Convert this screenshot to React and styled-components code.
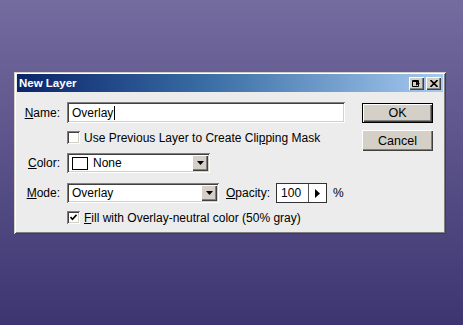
import styled, { createGlobalStyle } from "styled-components";

const Global = createGlobalStyle`
  html, body { margin: 0; padding: 0; }
  body {
    font-family: "Liberation Sans", Arial, sans-serif;
    font-size: 12px;
    color: #000;
  }
`;

const Page = styled.div`
  width: 463px;
  height: 325px;
  box-sizing: border-box;
  padding: 72px 0 0 14px;
  background: linear-gradient(to bottom, #746c9f 0%, #3d3570 100%);
  overflow: hidden;
`;

const Dialog = styled.div`
  width: 432px;
  height: 162px;
  box-sizing: border-box;
  padding: 2px 3px 3px 3px;
  background: #ececec;
  box-shadow: inset 1px 1px 0 #d4d0c8, inset -1px -1px 0 #404040,
    inset 2px 2px 0 #ffffff, inset -2px -2px 0 #808080;
  display: flex;
  flex-direction: column;
`;

const TitleBar = styled.div`
  height: 18px;
  display: flex;
  align-items: center;
  justify-content: space-between;
  padding: 0 2px 0 2px;
  background: linear-gradient(to right, #0a246a 0%, #3a6ea5 45%, #a6caf0 100%);
  color: #fff;
  font-weight: bold;
  font-size: 11.5px;
`;

const TitleButtons = styled.div`
  display: flex;
  gap: 2px;
`;

const TitleButton = styled.div`
  width: 15px;
  height: 13px;
  background: #d4d0c8;
  box-shadow: inset 1px 1px 0 #fff, inset -1px -1px 0 #404040,
    inset -2px -2px 0 #808080;
  display: flex;
  align-items: center;
  justify-content: center;
`;

const Body = styled.div`
  display: flex;
  padding-top: 10px;
`;

const Form = styled.div`
  display: flex;
  flex-direction: column;
`;

const Row = styled.div`
  display: flex;
  align-items: center;
  margin-top: ${(p) => p.$mt || 0}px;
  height: ${(p) => p.$h}px;
`;

const Label = styled.div`
  width: 43px;
  margin-right: 7px;
  text-align: right;
  white-space: nowrap;
`;

const Spacer = styled.div`
  width: 50px;
  flex: none;
`;

const Sunken = styled.div`
  box-sizing: border-box;
  width: ${(p) => p.$w}px;
  height: ${(p) => p.$h}px;
  background: #fff;
  box-shadow: inset 1px 1px 0 #808080, inset -1px -1px 0 #ffffff,
    inset 2px 2px 0 #404040, inset -2px -2px 0 #d4d0c8;
  display: flex;
  align-items: center;
  padding: 2px 2px 2px 5px;
`;

const Caret = styled.span`
  display: inline-block;
  width: 1px;
  height: 14px;
  background: #000;
  margin-left: 1px;
`;

const Grow = styled.div`
  flex: 1;
  display: flex;
  align-items: center;
`;

const ArrowButton = styled.div`
  width: 16px;
  height: 16px;
  flex: none;
  background: #d4d0c8;
  box-shadow: inset 1px 1px 0 #fff, inset -1px -1px 0 #404040,
    inset -2px -2px 0 #808080;
  display: flex;
  align-items: center;
  justify-content: center;
`;

const Swatch = styled.span`
  display: inline-block;
  width: 14px;
  height: 11px;
  border: 1px solid #000;
  background: #fff;
  margin-right: 5px;
`;

const Box = styled.span`
  box-sizing: border-box;
  width: 13px;
  height: 13px;
  flex: none;
  background: #fff;
  box-shadow: inset 1px 1px 0 #808080, inset -1px -1px 0 #ffffff,
    inset 2px 2px 0 #404040, inset -2px -2px 0 #d4d0c8;
  display: flex;
  align-items: center;
  justify-content: center;
  margin-right: 4px;
`;

const Opacity = styled.div`
  box-sizing: border-box;
  width: 51px;
  height: 20px;
  border: 1px solid #333;
  background: #fff;
  display: flex;
  margin: 0 6px;
`;

const OpacityValue = styled.div`
  flex: 1;
  display: flex;
  align-items: center;
  padding-left: 4px;
  border-right: 1px solid #555;
`;

const OpacityStep = styled.div`
  width: 17px;
  display: flex;
  align-items: center;
  justify-content: center;
`;

const Buttons = styled.div`
  display: flex;
  flex-direction: column;
  gap: 7px;
  margin-left: 17px;
  padding-top: 1px;
`;

const Button = styled.div`
  box-sizing: border-box;
  width: 71px;
  height: ${(p) => (p.$default ? 20 : 21)}px;
  background: #d4d0c8;
  display: flex;
  align-items: center;
  justify-content: center;
  font-size: 12.5px;
  box-shadow: ${(p) =>
    p.$default
      ? "inset 0 0 0 1px #000, inset 2px 2px 0 #fff, inset -2px -2px 0 #404040, inset -3px -3px 0 #808080"
      : "inset 1px 1px 0 #fff, inset -1px -1px 0 #404040, inset -2px -2px 0 #808080"};
`;

const InlineLabel = styled.span`
  margin-left: 7px;
`;

const U = styled.span`
  text-decoration: underline;
`;

const DownArrow = () => (
  <svg width="7" height="4" viewBox="0 0 7 4">
    <path d="M0 0h7L3.5 4z" fill="#000" />
  </svg>
);

export default function App() {
  return (
    <Page>
      <Global />
      <Dialog>
        <TitleBar>
          <span>New Layer</span>
          <TitleButtons>
            <TitleButton>
              <svg width="9" height="7" viewBox="0 0 9 7">
                <path d="M0.5 0.5h6v6h-6z" fill="none" stroke="#000" />
                <path d="M0.5 1.5h6" stroke="#000" />
                <path d="M4 1.5l4 2-4 2z" fill="#000" />
              </svg>
            </TitleButton>
            <TitleButton>
              <svg width="8" height="7" viewBox="0 0 8 7">
                <path d="M0.5 0l7 7M7.5 0l-7 7" stroke="#000" strokeWidth="1.6" />
              </svg>
            </TitleButton>
          </TitleButtons>
        </TitleBar>
        <Body>
          <Form>
            <Row $h={21}>
              <Label>
                <U>N</U>ame:
              </Label>
              <Sunken $w={278} $h={21}>
                Overlay
                <Caret />
              </Sunken>
            </Row>
            <Row $h={13} $mt={8}>
              <Spacer />
              <Box />
              Use Previous Layer to Create Cli<U>p</U>ping Mask
            </Row>
            <Row $h={20} $mt={9}>
              <Label>
                <U>C</U>olor:
              </Label>
              <Sunken $w={143} $h={20}>
                <Grow>
                  <Swatch />
                  None
                </Grow>
                <ArrowButton>
                  <DownArrow />
                </ArrowButton>
              </Sunken>
            </Row>
            <Row $h={20} $mt={10}>
              <Label>
                <U>M</U>ode:
              </Label>
              <Sunken $w={152} $h={20}>
                <Grow>Overlay</Grow>
                <ArrowButton>
                  <DownArrow />
                </ArrowButton>
              </Sunken>
              <InlineLabel>
                <U>O</U>pacity:
              </InlineLabel>
              <Opacity>
                <OpacityValue>100</OpacityValue>
                <OpacityStep>
                  <svg width="5" height="9" viewBox="0 0 5 9">
                    <path d="M0 0l5 4.5L0 9z" fill="#000" />
                  </svg>
                </OpacityStep>
              </Opacity>
              %
            </Row>
            <Row $h={13} $mt={8}>
              <Spacer />
              <Box>
                <svg width="7" height="7" viewBox="0 0 7 7">
                  <path d="M0.5 3l2 2.2L6.5 0.8" fill="none" stroke="#000" strokeWidth="1.6" />
                </svg>
              </Box>
              <span>
                <U>F</U>ill with Overlay-neutral color (50% gray)
              </span>
            </Row>
          </Form>
          <Buttons>
            <Button $default>OK</Button>
            <Button>Cancel</Button>
          </Buttons>
        </Body>
      </Dialog>
    </Page>
  );
}
